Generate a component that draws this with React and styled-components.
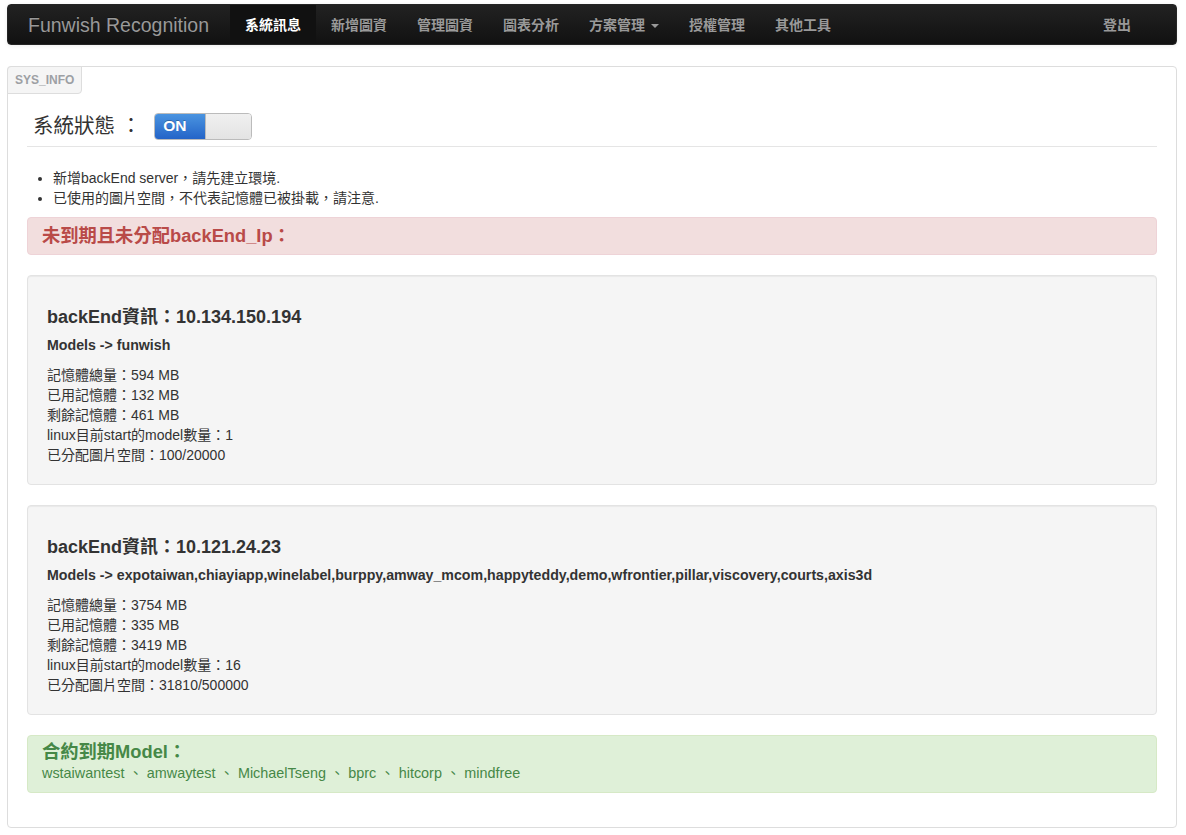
import React from "react";
import styled, { createGlobalStyle } from "styled-components";

const GlobalStyle = createGlobalStyle`
  body {
    margin: 0;
    background: #fff;
    font-family: "Liberation Sans", "Noto Sans CJK TC", sans-serif;
    font-size: 14px;
    line-height: 20px;
    color: #333;
  }
`;

const Page = styled.div`
  padding: 4px 9px 8px 7px;
`;

const Navbar = styled.div`
  display: flex;
  align-items: stretch;
  height: 41px;
  padding: 0 20px;
  background-image: linear-gradient(to bottom, #222, #111);
  border: 1px solid #252525;
  border-radius: 4px;
  box-sizing: border-box;
  box-shadow: 0 1px 4px rgba(0, 0, 0, 0.065);
`;

const Brand = styled.div`
  display: flex;
  align-items: center;
  margin-left: -20px;
  padding: 0 21px 0 20px;
  font-size: 19.5px;
  color: #999;
  text-shadow: 0 -1px 0 rgba(0, 0, 0, 0.25);
`;

const NavList = styled.div`
  display: flex;
  flex: 1;
`;

const NavLink = styled.div`
  display: flex;
  align-items: center;
  gap: 6px;
  padding: 0 15px;
  font-size: 14px;
  font-weight: 700;
  color: ${(p) => (p.active ? "#fff" : "#999")};
  background: ${(p) => (p.active ? "#111" : "transparent")};
  margin-left: ${(p) => (p.push ? "auto" : "0")};
  margin-right: ${(p) => (p.push ? "10px" : "0")};
  text-shadow: 0 -1px 0 rgba(0, 0, 0, 0.25);
`;

const Caret = styled.span`
  width: 0;
  height: 0;
  border-left: 4px solid transparent;
  border-right: 4px solid transparent;
  border-top: 4px solid #999;
  margin-top: 2px;
`;

const Example = styled.div`
  position: relative;
  margin-top: 21px;
  padding: 39px 19px 14px;
  border: 1px solid #ddd;
  border-radius: 4px;
`;

const Tag = styled.div`
  position: absolute;
  top: -1px;
  left: -1px;
  padding: 3px 7px;
  font-size: 12px;
  font-weight: 700;
  line-height: 20px;
  color: #9da0a4;
  background: #f5f5f5;
  border: 1px solid #ddd;
  border-radius: 4px 0 4px 0;
`;

const StatusRow = styled.div`
  display: flex;
  align-items: center;
  height: 40px;
  padding-left: 6px;
  border-bottom: 1px solid #e5e5e5;
`;

const StatusTitle = styled.h3`
  margin: 0 13px 0 0;
  font-size: 20.5px;
  font-weight: 400;
  line-height: 28px;
  color: #333;
`;

const Switch = styled.div`
  display: flex;
  width: 98px;
  height: 27px;
  border: 1px solid #bbb;
  border-radius: 4px;
  box-sizing: border-box;
  overflow: hidden;
`;

const SwitchOn = styled.div`
  width: 50px;
  display: flex;
  align-items: center;
  padding-left: 8px;
  box-sizing: border-box;
  font-size: 15.5px;
  font-weight: 700;
  color: #fff;
  background-image: linear-gradient(to bottom, #4a94e0, #2464c8);
  text-shadow: 0 -1px 0 rgba(0, 0, 0, 0.25);
`;

const SwitchKnob = styled.div`
  flex: 1;
  border-left: 1px solid #bbb;
  background-image: linear-gradient(to bottom, #f0f0f0, #e3e3e3);
`;

const Notes = styled.ul`
  margin: 21px 0 9px 0;
  padding-left: 26px;
  font-size: 14px;
  line-height: 20px;
`;

const Alert = styled.div`
  margin-bottom: 20px;
  padding: ${(p) => (p.tall ? "6px 14px 9px" : "8px 14px")};
  border: 1px solid ${(p) => (p.tone === "error" ? "#eed3d7" : "#d6e9c6")};
  border-radius: 4px;
  background: ${(p) => (p.tone === "error" ? "#f2dede" : "#dff0d8")};
  color: ${(p) => (p.tone === "error" ? "#b94a48" : "#468847")};
`;

const AlertTitle = styled.div`
  font-size: 18.3px;
  font-weight: 700;
  line-height: 20px;
`;

const AlertText = styled.div`
  margin-top: 1px;
  font-size: 14.4px;
  line-height: 20px;
`;

const Well = styled.div`
  margin: 20px 0;
  padding: 9px 19px;
  background: #f5f5f5;
  border: 1px solid #e3e3e3;
  border-radius: 4px;
  box-shadow: inset 0 1px 1px rgba(0, 0, 0, 0.05);
`;

const WellTitle = styled.h4`
  margin: 22px 0 8px;
  font-size: 18px;
  font-weight: 700;
  line-height: 20px;
  color: #333;
`;

const Models = styled.h5`
  margin: 8px 0 10px;
  font-size: 14.2px;
  font-weight: 700;
  line-height: 20px;
  color: #333;
`;

const Stats = styled.div`
  margin-bottom: 10px;
`;

const StatLine = styled.div`
  font-size: 14px;
  line-height: 20px;
`;

const navItems = ["新增圖資", "管理圖資", "圖表分析"];

const servers = [
  {
    ip: "10.134.150.194",
    models: "funwish",
    total: "594 MB",
    used: "132 MB",
    free: "461 MB",
    started: "1",
    space: "100/20000",
  },
  {
    ip: "10.121.24.23",
    models:
      "expotaiwan,chiayiapp,winelabel,burppy,amway_mcom,happyteddy,demo,wfrontier,pillar,viscovery,courts,axis3d",
    total: "3754 MB",
    used: "335 MB",
    free: "3419 MB",
    started: "16",
    space: "31810/500000",
  },
];

const expired = ["wstaiwantest", "amwaytest", "MichaelTseng", "bprc", "hitcorp", "mindfree"];

const App = () => {
  return (
    <Page>
      <GlobalStyle />
      <Navbar>
        <Brand>Funwish Recognition</Brand>
        <NavList>
          <NavLink active>系統訊息</NavLink>
          {navItems.map((item) => (
            <NavLink key={item}>{item}</NavLink>
          ))}
          <NavLink>
            方案管理 <Caret />
          </NavLink>
          <NavLink>授權管理</NavLink>
          <NavLink>其他工具</NavLink>
          <NavLink push>登出</NavLink>
        </NavList>
      </Navbar>

      <Example>
        <Tag>SYS_INFO</Tag>
        <StatusRow>
          <StatusTitle>系統狀態 ：</StatusTitle>
          <Switch>
            <SwitchOn>ON</SwitchOn>
            <SwitchKnob />
          </Switch>
        </StatusRow>

        <Notes>
          <li>新增backEnd server，請先建立環境.</li>
          <li>已使用的圖片空間，不代表記憶體已被掛載，請注意.</li>
        </Notes>

        <Alert tone="error">
          <AlertTitle>未到期且未分配backEnd_Ip：</AlertTitle>
        </Alert>

        {servers.map((s) => (
          <Well key={s.ip}>
            <WellTitle>backEnd資訊：{s.ip}</WellTitle>
            <Models>Models -&gt; {s.models}</Models>
            <Stats>
              <StatLine>記憶體總量：{s.total}</StatLine>
              <StatLine>已用記憶體：{s.used}</StatLine>
              <StatLine>剩餘記憶體：{s.free}</StatLine>
              <StatLine>linux目前start的model數量：{s.started}</StatLine>
              <StatLine>已分配圖片空間：{s.space}</StatLine>
            </Stats>
          </Well>
        ))}

        <Alert tone="success" tall>
          <AlertTitle>合約到期Model：</AlertTitle>
          <AlertText>{expired.join(" 、 ")}</AlertText>
        </Alert>
      </Example>
    </Page>
  );
};

export default App;
